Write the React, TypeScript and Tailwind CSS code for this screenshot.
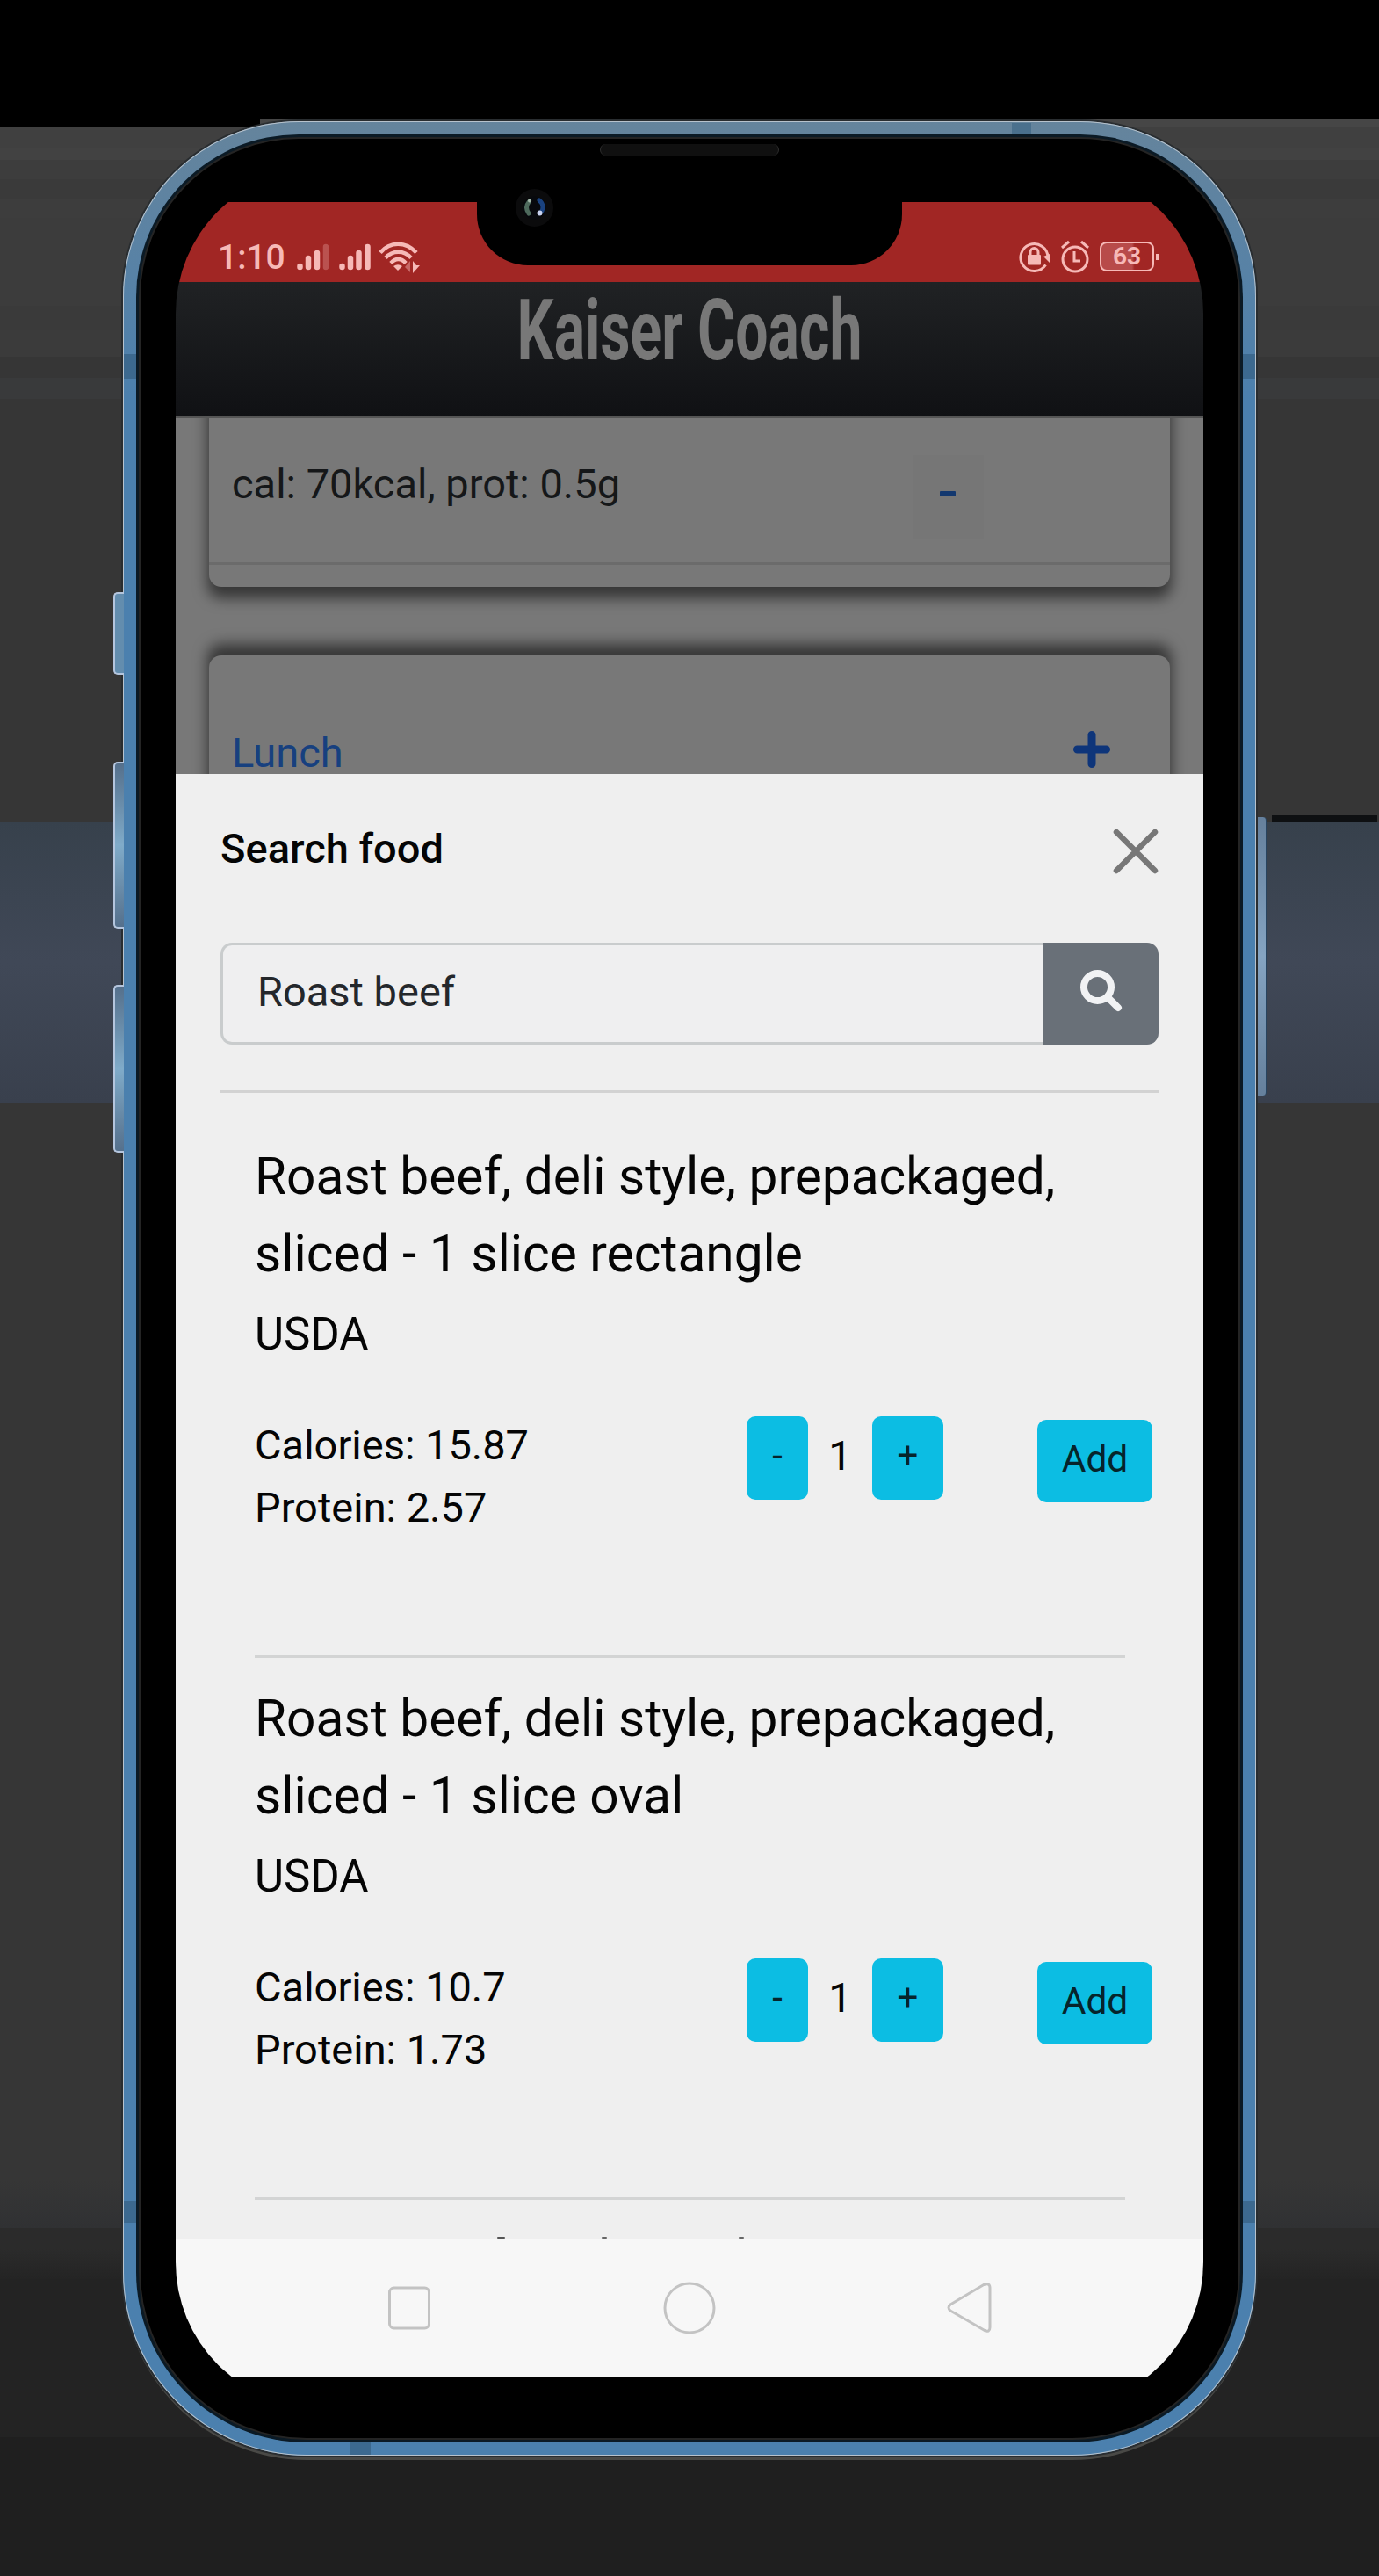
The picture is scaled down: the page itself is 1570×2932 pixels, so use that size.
import React from "react";

const foods = [
  { name: "Roast beef, deli style, prepackaged, sliced - 1 slice rectangle", source: "USDA", calories: "15.87", protein: "2.57" },
  { name: "Roast beef, deli style, prepackaged, sliced - 1 slice oval", source: "USDA", calories: "10.7", protein: "1.73" },
];

function Backdrop() {
  return (
    <div className="absolute inset-0 flex flex-col">
      <div className="h-[136px] bg-black" />
      <div className="flex h-2">
        <div className="w-[296px] bg-black" />
        <div className="grow bg-[#464646]" />
      </div>
      <div className="h-[24px] bg-[#404040]" />
      <div className="h-[14px] bg-[#424242]" />
      <div className="h-[22px] bg-[#3d3d3d]" />
      <div className="h-[22px] bg-[#3a3a3a]" />
      <div className="h-[22px] bg-[#3d3d3d]" />
      <div className="h-[100px] bg-[#3c3c3c]" />
      <div className="h-[28px] bg-[#3a3a3a]" />
      <div className="h-[30px] bg-[#3b3b3b]" />
      <div className="h-[24px] bg-[#363636]" />
      <div className="h-[24px] bg-[#393a3b]" />
      <div className="h-[474px] bg-[#363636]" />
      <div className="flex h-2 justify-end bg-[#363636] pr-[2px]">
        <div className="w-[120px] bg-[#0e1012]" />
      </div>
      <div className="h-[320px] bg-linear-to-b from-[#37414c] via-[#404857] to-[#39404d]" />
      <div className="h-[1224px] bg-[#363636]" />
      <div className="h-[56px] bg-linear-to-b from-[#363636] to-[#303133]" />
      <div className="h-[24px] bg-[#2b2b2b]" />
      <div className="h-[34px] bg-linear-to-b from-[#2b2b2b] to-[#242424]" />
      <div className="h-[180px] bg-[#232323]" />
      <div className="grow bg-[#1f1f1f]" />
    </div>
  );
}

function StatusBar() {
  return (
    <div className="flex h-[91px] items-end justify-between bg-[#a12624] pr-[51px] pl-[48px] text-[#f6b9b7]">
      <div className="flex items-end">
        <span className="w-[90px] text-[39px] leading-[55px] font-medium">1:10</span>
        <svg className="mb-[12px] h-[32px] w-[36px]" viewBox="0 0 36 32" stroke="currentColor" strokeWidth="6.500" strokeLinecap="round">
          <path d="M3.500 27v-1M13 27V17M23 27V11" />
          <path d="M33 27V4" opacity=".3" />
        </svg>
        <svg className="mb-[12px] ml-[12px] h-[32px] w-[36px]" viewBox="0 0 36 32" stroke="currentColor" strokeWidth="6.500" strokeLinecap="round">
          <path d="M3.500 27v-1M13 27V17M22.500 27V11M32.500 27V4" />
        </svg>
        <svg className="mb-[9px] ml-[9px] h-[37px] w-[48px]" viewBox="0 0 48 37" fill="none" stroke="currentColor" strokeWidth="4.500">
          <path d="M2 12.500C13-.5 31-.5 43 12.500M8 18.500C16 9.500 29 9.500 37 18.500M14 24.500C19 18.500 26 18.500 31 24.500" />
          <path d="M17 28Q22 24.500 27 28L22 33Z" fill="currentColor" stroke="none" />
          <path d="M39 22v14l8-9h-4z" fill="currentColor" stroke="none" />
          <path d="M36 22v13l-6-6z" fill="currentColor" stroke="none" opacity=".45" />
        </svg>
      </div>
      <div className="mb-[10px] flex items-center">
        <svg className="h-[38px] w-[37px]" viewBox="0 0 37 38" fill="none" stroke="currentColor" strokeWidth="3">
          <path d="M30.500 28.500A15.500 15.500 0 1 1 33 20" />
          <path d="M28 19l7-3v10z" fill="currentColor" stroke="none" />
          <rect x="10" y="17" width="15" height="11.500" rx="1" fill="currentColor" stroke="none" />
          <path d="M13 18v-4a4.500 4.500 0 0 1 9 0v4" />
        </svg>
        <svg className="ml-[10px] h-[38px] w-[34px]" viewBox="0 0 34 38" fill="none" stroke="currentColor" strokeWidth="3">
          <circle cx="17" cy="22" r="14" />
          <path d="M16 13v11h7M2 9l8-7M32 9l-8-7" />
        </svg>
        <div className="ml-[11px] flex h-[34px] w-[62px] items-center justify-center rounded-[8px] border-[2px] border-current bg-linear-to-r from-[#b84b4a] from-60% to-[#a12624] to-65% text-[28px] leading-[30px] font-bold">63</div>
        <div className="ml-[2px] h-[7px] w-[3px] bg-current" />
      </div>
    </div>
  );
}

function DiaryBehind() {
  return (
    <div className="h-[407px] overflow-hidden border-t-2 border-[#555] bg-[#787878]">
      <div className="-mt-[30px] mx-[38px] h-[222px] rounded-b-[14px] bg-[#787878] pt-[30px] shadow-[0_11px_16px_2px_rgba(0,0,0,0.55)]">
        <div className="flex h-[167px] items-start border-b-[3px] border-[#6b6b6b] pl-[26px]">
          <span className="mt-[45px] w-[776px] text-[47px] leading-[60px] text-[#151719]">cal: 70kcal, prot: 0.5g</span>
          <div className="mt-[42px] flex h-[95px] w-[80px] items-center justify-center bg-[#767676]">
            <div className="mr-[3px] mb-[8px] h-[6px] w-[18px] rounded-[1px] bg-[#13386f]" />
          </div>
        </div>
      </div>
      <div className="mx-[38px] mt-[78px] flex h-[170px] items-start justify-between rounded-t-[14px] bg-[#787878] pr-[68px] pl-[26px] shadow-[0_-11px_16px_2px_rgba(0,0,0,0.55)]">
        <span className="mt-[87px] text-[47px] leading-[48px] text-[#17407f]">Lunch</span>
        <svg className="mt-[86px] h-[42px] w-[42px]" viewBox="0 0 42 42" stroke="#0e357a" strokeWidth="9" strokeLinecap="round">
          <path d="M21 4.500v33M4.500 21h33" />
        </svg>
      </div>
    </div>
  );
}

function FoodItem({ food }: { food: (typeof foods)[number] }) {
  return (
    <div className="mr-[38px] ml-[39px] h-[617px] shrink-0 border-b-[3px] border-[#d3d4d4] pt-[25px]">
      <h2 className="w-[950px] text-[58.600px] leading-[88px]">{food.name}</h2>
      <p className="pt-[4px] text-[51px] leading-[88px]">{food.source}</p>
      <div className="mt-[27px] flex items-start text-[47px] leading-[71px]">
        <div className="w-[560px] pt-[19px]">
          <p>Calories: {food.calories}</p>
          <p>Protein: {food.protein}</p>
        </div>
        <button className="mt-[22px] h-[95px] w-[70px] rounded-[10px] bg-[#0cbde3] pb-[5px] text-[42px] leading-[88px] text-[#06242b]">-</button>
        <span className="mt-[31px] w-[73px] text-center">1</span>
        <button className="mt-[22px] h-[95px] w-[81px] rounded-[10px] bg-[#0cbde3] pb-[5px] text-[42px] leading-[88px] text-[#06242b]">+</button>
        <button className="mt-[26px] -mr-[38px] ml-[107px] h-[94px] w-[131px] shrink-0 rounded-[10px] bg-[#0cbde3] pb-[5px] text-[42.500px] leading-[87px] text-[#06242b]">Add</button>
      </div>
    </div>
  );
}

function SearchSheet() {
  return (
    <div className="relative flex h-[1667px] flex-col overflow-hidden bg-[#efefef] pr-[51px] pl-[51px] text-[#050505]">
      <div className="flex h-[192px] items-start justify-between">
        <h1 className="mt-[55px] text-[47px] leading-[60px] font-medium">Search food</h1>
        <svg className="mt-[62px] h-[52px] w-[52px]" viewBox="0 0 52 52" stroke="#777" strokeWidth="6.500" strokeLinecap="round">
          <path d="M4 4l44 44M48 4L4 48" />
        </svg>
      </div>
      <div className="flex h-[116px] shrink-0">
        <div className="flex grow items-center rounded-l-[13px] border-[3px] border-r-0 border-[#c9cccd] bg-[#efeff0] pb-[4px] pl-[39px] text-[47px] text-[#24272b]">Roast beef</div>
        <button className="flex w-[132px] items-center justify-center rounded-r-[13px] bg-[#697078] pb-[8px]">
          <svg className="ml-[2px] h-[50px] w-[50px]" viewBox="0 0 50 50" fill="none" stroke="#f1f2f4">
            <circle cx="20.500" cy="21.500" r="15.500" strokeWidth="8" />
            <path d="M33 34l11 11" strokeWidth="8" strokeLinecap="round" />
          </svg>
        </button>
      </div>
      <div className="mt-[52px] h-[3px] shrink-0 bg-[#d2d2d2]" />
      <div className="h-[26px] shrink-0" />
      {foods.map((food) => (
        <FoodItem key={food.name} food={food} />
      ))}
      <div className="absolute bottom-0 left-[366px] h-[2px] w-[9px] rounded-full bg-[#555]" />
      <div className="absolute bottom-0 left-[485px] h-[2px] w-[6px] rounded-full bg-[#666]" />
      <div className="absolute bottom-0 left-[641px] h-[2px] w-[6px] rounded-full bg-[#666]" />
    </div>
  );
}

function NavBar() {
  return (
    <div className="flex h-[157px] items-start bg-[#f7f7f7] pt-[49px] pl-[242px]">
      <svg className="h-[60px] w-[48px]" viewBox="0 0 48 60" fill="none" stroke="#c3c3c3" strokeWidth="3">
        <rect x="1.500" y="7" width="45" height="46" rx="5" />
      </svg>
      <svg className="ml-[265px] h-[60px] w-[60px]" viewBox="0 0 60 60" fill="none" stroke="#c3c3c3" strokeWidth="3">
        <circle cx="30" cy="30" r="28" />
      </svg>
      <svg className="ml-[263px] h-[60px] w-[52px]" viewBox="0 0 52 60" fill="none" stroke="#c3c3c3" strokeWidth="3" strokeLinejoin="round">
        <path d="M4 26L42 3.500Q49 1 49 7V52Q49 58 43 55.500L4 33Q0 29.500 4 26Z" />
      </svg>
    </div>
  );
}

function Screen() {
  return (
    <div className="relative mx-auto mt-[32px] h-[2548px] w-[1170px] overflow-hidden rounded-[165px] bg-black pt-[38px]">
      <StatusBar />
      <header className="flex h-[153px] justify-center bg-linear-to-b from-[#202224] to-[#101114]">
        <span className="h-[110px] scale-x-[0.682] text-[97px] leading-[110px] font-bold whitespace-nowrap text-[#787878]">Kaiser Coach</span>
      </header>
      <DiaryBehind />
      <SearchSheet />
      <NavBar />
      <div className="h-[36px] bg-black" />
      <div className="absolute top-0 left-[343px] h-[110px] w-[484px] rounded-b-[58px] bg-black" />
      <div className="absolute top-[23px] left-[387px] flex h-[43px] w-[43px] items-center justify-center rounded-full bg-[#0b0b0c]">
        <svg className="h-[27px] w-[27px]" viewBox="0 0 27 27" fill="none" strokeLinecap="round">
          <circle cx="13.500" cy="13.500" r="13" fill="#07090d" />
          <path d="M7 7Q2 13 7 20" stroke="#4e6a5c" strokeWidth="5" />
          <path d="M19 5Q25 10 22 17" stroke="#1a427f" strokeWidth="5" />
          <circle cx="8" cy="5.500" r="2" fill="#a5b9aa" />
          <circle cx="19.500" cy="19.500" r="3" fill="#c9d3f0" />
        </svg>
      </div>
    </div>
  );
}

export default function App() {
  return (
    <div className="relative h-[2932px] w-[1570px] overflow-hidden bg-[#363636] pt-[138px] [font-family:Roboto,sans-serif]">
      <Backdrop />
      <div className="relative mx-auto h-[2657px] w-[1290px]">
        <div className="absolute top-[536px] -left-[11px] h-[94px] w-[12px] rounded-l-[5px] border-2 border-r-0 border-[#b4c5dd] bg-[#638dae]" />
        <div className="absolute top-[729px] -left-[11px] h-[190px] w-[12px] rounded-l-[5px] border-2 border-r-0 border-[#b4c5dd] bg-linear-to-b from-[#55708c] via-[#80abc9] to-[#55708c]" />
        <div className="absolute top-[983px] -left-[11px] h-[191px] w-[12px] rounded-l-[5px] border-2 border-r-0 border-[#b4c5dd] bg-linear-to-b from-[#55708c] via-[#80abc9] to-[#55708c]" />
        <div className="absolute top-[792px] -right-[12px] h-[317px] w-[10px] rounded-r-[4px] border-r border-[#28445f] bg-linear-to-b from-[#65809c] via-[#85a4c2] to-[#65809c]" />
        <div className="h-full rounded-t-[200px] rounded-b-[209px] bg-linear-to-b from-[#65849c] to-[#4b80ae] to-[12%] p-[15px] shadow-[0_0_0_2px_#292d30,0_5px_0_0_#494946] ring-1 ring-[#b7c2cc] ring-inset">
          <div className="h-full rounded-t-[185px] rounded-b-[194px] bg-[#0b1a25] p-[3px]">
            <div className="flex h-full flex-col rounded-t-[182px] rounded-b-[191px] border-2 border-[#242424] bg-black pt-[2px]">
              <Screen />
            </div>
          </div>
        </div>
        <div className="absolute top-[2px] left-[1012px] h-[13px] w-[22px] bg-[#4a708d]" />
        <div className="absolute top-[265px] left-px h-[28px] w-[14px] bg-[#3c698f]" />
        <div className="absolute top-[265px] right-px h-[28px] w-[14px] bg-[#3c698f]" />
        <div className="absolute top-[2367px] left-px h-[25px] w-[14px] bg-[#3c698f]" />
        <div className="absolute top-[2367px] right-px h-[25px] w-[14px] bg-[#3c698f]" />
        <div className="absolute bottom-px left-[258px] h-[14px] w-[24px] bg-[#3c698f]" />
        <div className="absolute top-[26px] left-[543px] h-[13px] w-[204px] rounded-full border-x border-[#303030] bg-[#101010]" />
      </div>
    </div>
  );
}
